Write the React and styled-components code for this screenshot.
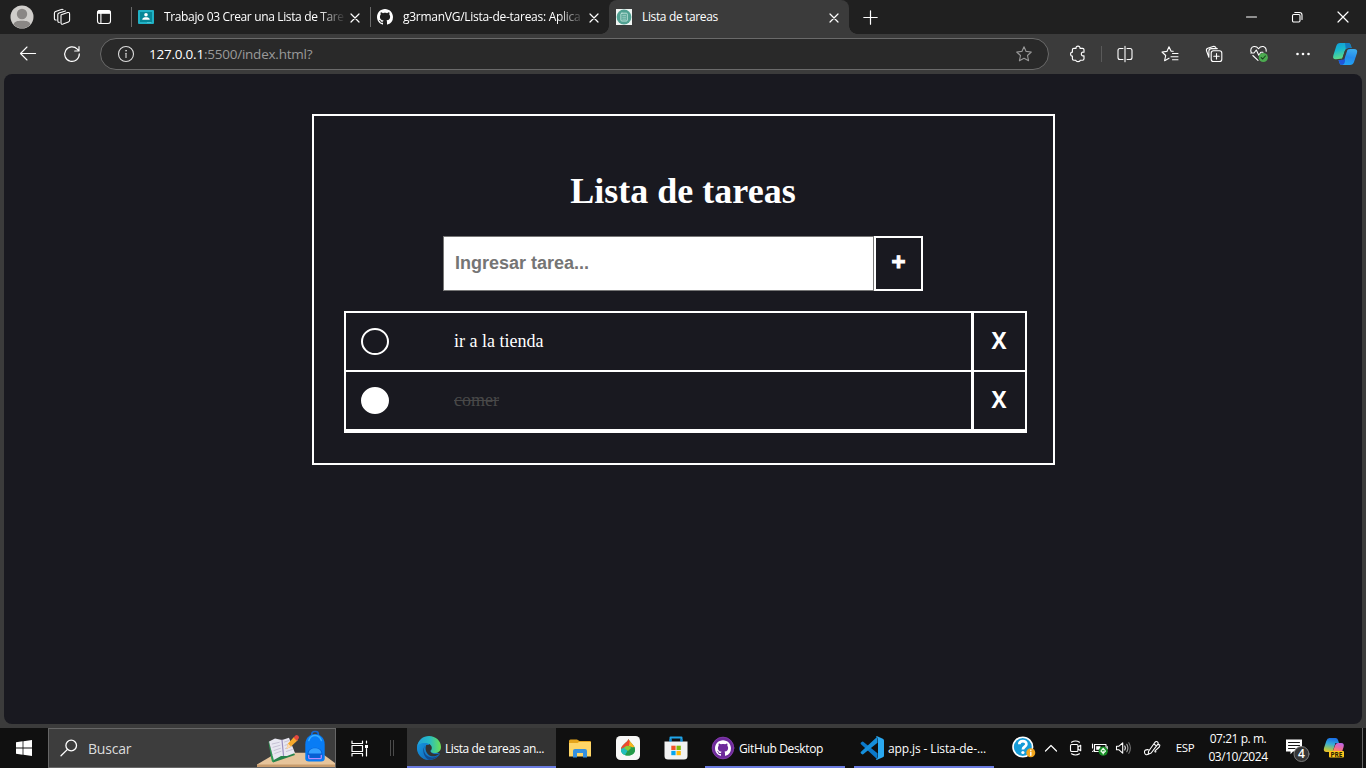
import React from 'react';
import styled, { createGlobalStyle } from 'styled-components';

const Global = createGlobalStyle`
  * { box-sizing: border-box; }
  html, body { margin: 0; padding: 0; background: #3b3b3b; overflow: hidden; }
  svg { display: block; flex: none; }
`;

const ui = `"Open Sans", "Noto Sans", sans-serif`;

const Screen = styled.div`
  width: 1366px;
  height: 768px;
  display: flex;
  flex-direction: column;
  background: #3b3b3b;
  color: #fff;
  font-family: ${ui};
  overflow: hidden;
`;

/* ---------- browser chrome ---------- */

const TabStrip = styled.header`
  height: 34px;
  display: flex;
  background: #202020;
`;

const Slot = styled.div`
  width: ${(p) => p.$w}px;
  height: 100%;
  flex: none;
  display: flex;
  align-items: center;
  justify-content: center;
`;

const Spacer = styled.div`
  flex: ${(p) => (p.$w ? `0 0 ${p.$w}px` : '1')};
`;

const Tab = styled.div`
  position: relative;
  width: ${(p) => p.$w || 239}px;
  height: 34px;
  flex: none;
  display: flex;
  align-items: center;
  padding: 0 10px 0 7px;
  background: ${(p) => (p.$active ? '#3b3b3b' : 'transparent')};
  border-radius: 8px 8px 0 0;
`;

const TabDivider = styled.i`
  position: absolute;
  left: 0;
  top: 7px;
  width: 1px;
  height: 20px;
  background: #6a6a6a;
`;

const TabFlare = styled.i`
  position: absolute;
  bottom: 0;
  ${(p) => (p.$side === 'left' ? 'left: -8px;' : 'right: -8px;')}
  width: 8px;
  height: 8px;
  background: radial-gradient(circle at ${(p) => (p.$side === 'left' ? '0' : '100%')} 0, transparent 7.5px, #3b3b3b 8px);
`;

const TabTitle = styled.span`
  width: 180px;
  margin-left: 10px;
  padding-bottom: 1px;
  white-space: nowrap;
  font-size: 12px;
  line-height: 18px;
  letter-spacing: ${(p) => p.$ls}px;
  mask-image: ${(p) => (p.$fade ? 'linear-gradient(to right, #000 155px, transparent 182px)' : 'none')};
`;

const TabClose = styled.div`
  margin-left: auto;
  padding-top: 1px;
`;

const Toolbar = styled.nav`
  height: 40px;
  display: flex;
  align-items: center;
  background: #3b3b3b;
`;

const AddressBar = styled.div`
  width: 949px;
  height: 32px;
  flex: none;
  display: flex;
  align-items: center;
  padding: 0 15px 0 16px;
  border: 1px solid #6a6a6a;
  border-radius: 16px;
  background: #292929;
`;

const Url = styled.div`
  flex: 1;
  margin-left: 14px;
  font-size: 13.5px;
  line-height: 20px;
  letter-spacing: -0.23px;
  color: #9a9a9a;
  b { font-weight: 400; color: #fff; }
`;

const ToolDivider = styled.i`
  width: 1px;
  height: 16px;
  background: #5a5a5a;
`;

/* ---------- page ---------- */

const Viewport = styled.main`
  width: 1358px;
  height: 650px;
  margin: 0 4px 4px;
  padding-top: 40px;
  border-radius: 8px;
  background: #191920;
`;

const Card = styled.section`
  width: 743px;
  height: 351px;
  margin-left: 308px;
  padding: 55px 26px 0 30px;
  border: 2px solid #fff;
  display: flex;
  flex-direction: column;
  font-family: "Liberation Serif", serif;
`;

const Title = styled.h1`
  margin: 0 0 24px;
  padding-right: 5px;
  font-size: 36px;
  line-height: 41px;
  font-weight: 700;
  text-align: center;
`;

const TaskForm = styled.div`
  display: flex;
  height: 55px;
  margin-left: 99px;
`;

const TaskInput = styled.input`
  width: 431px;
  height: 55px;
  padding: 0 11px;
  border: 1px solid #767676;
  border-radius: 0;
  background: #fff;
  font: 700 18px "Liberation Sans", sans-serif;
  &::placeholder { color: #757575; opacity: 1; }
`;

const AddButton = styled.button`
  width: 49px;
  height: 55px;
  padding: 0 0 4px;
  border: 2px solid #fff;
  background: #191920;
  color: #fff;
  font: 700 24px "Liberation Sans", sans-serif;
  -webkit-text-stroke: 1px #fff;
`;

const TaskList = styled.ul`
  width: 683px;
  height: 122px;
  margin: 20px 0 0;
  padding: 0;
  list-style: none;
  border: 2px solid #fff;
`;

const TaskRow = styled.li`
  display: flex;
  align-items: center;
  height: 59px;
  border-bottom: 2px solid #fff;
`;

const Check = styled.span`
  width: 28px;
  height: 27px;
  margin-left: 15px;
  border: 2px solid #fff;
  border-radius: 50%;
  background: ${(p) => (p.$done ? '#fff' : 'transparent')};
`;

const TaskText = styled.span`
  flex: 1;
  margin-left: 65px;
  padding-bottom: 2px;
  font-size: 18px;
  line-height: 20px;
  color: ${(p) => (p.$done ? '#484848' : '#fff')};
  text-decoration: ${(p) => (p.$done ? 'line-through' : 'none')};
`;

const RemoveButton = styled.button`
  width: 54px;
  align-self: stretch;
  padding: 0 1px 3px 0;
  border: 0;
  border-left: 3px solid #fff;
  background: transparent;
  color: #fff;
  font: 700 22.5px "Open Sans", sans-serif;
`;

/* ---------- taskbar ---------- */

const Taskbar = styled.footer`
  height: 40px;
  display: flex;
  background: #101010;
`;

const Search = styled.div`
  width: 288px;
  height: 40px;
  flex: none;
  display: flex;
  align-items: center;
  padding-left: 11px;
  border: 1px solid #666;
  background: #3d3d3d;
  color: #dcdcdc;
  font-size: 14px;
  span { margin-left: 10px; flex: 1; letter-spacing: -0.2px; }
`;

const TaskButton = styled.div`
  width: ${(p) => p.$w}px;
  height: 40px;
  flex: none;
  display: flex;
  align-items: center;
  padding: 2px 0 0 ${(p) => p.$pad}px;
  gap: 4px;
  white-space: nowrap;
  background: ${(p) => (p.$active ? '#333333' : 'transparent')};
  border-bottom: 2px solid #6b7ce0;
  font-size: 12px;
  letter-spacing: ${(p) => p.$ls}px;
`;

const Language = styled(Slot)`
  padding-bottom: 1px;
  font-size: 11.5px;
  letter-spacing: -0.3px;
`;

const Clock = styled.div`
  width: 74px;
  flex: none;
  padding-top: 2px;
  text-align: center;
  font-size: 12px;
  line-height: 18px;
  letter-spacing: -0.45px;
  white-space: nowrap;
`;

const DesktopEdge = styled.i`
  width: 4px;
  border-left: 1px solid #666;
`;

/* ---------- icons ---------- */

const Icon = ({ w = 16, h, vb, children, sw = 1.1, c = '#fff' }) => (
  <svg width={w} height={h || w} viewBox={vb || `0 0 ${w} ${h || w}`} fill="none" stroke={c} strokeWidth={sw} strokeLinecap="round" strokeLinejoin="round">
    {children}
  </svg>
);

const GH = 'M8 0C3.58 0 0 3.58 0 8c0 3.54 2.29 6.53 5.47 7.59.4.07.55-.17.55-.38 0-.19-.01-.82-.01-1.49-2.01.37-2.53-.49-2.69-.94-.09-.23-.48-.94-.82-1.13-.28-.15-.68-.52-.01-.53.63-.01 1.08.58 1.23.82.72 1.21 1.87.87 2.33.66.07-.52.28-.87.51-1.07-1.78-.2-3.64-.89-3.64-3.95 0-.87.31-1.59.82-2.15-.08-.2-.36-1.02.08-2.12 0 0 .67-.21 2.2.82.64-.18 1.32-.27 2-.27s1.36.09 2 .27c1.53-1.04 2.2-.82 2.2-.82.44 1.1.16 1.92.08 2.12.51.56.82 1.27.82 2.15 0 3.07-1.87 3.75-3.65 3.95.29.25.54.73.54 1.48 0 1.07-.01 1.93-.01 2.2 0 .21.15.46.55.38A8.01 8.01 0 0 0 16 8c0-4.42-3.58-8-8-8z';

const Avatar = () => (
  <Icon w={24}>
    <g stroke="none">
      <circle cx="12" cy="12" r="11.5" fill="#d0cecb" />
      <circle cx="12" cy="9" r="5.2" fill="#8a8785" />
      <path d="M3.5 19.5C4.5 16.4 7 15.8 12 15.8s7.5.6 8.5 3.7A11.5 11.5 0 0 1 3.5 19.5z" fill="#8a8785" />
    </g>
  </Icon>
);
const Workspaces = () => (
  <Icon w={18}>
    <path d="M8.3 6.8 14.7 4.6Q16.6 4 16.6 6V12.2Q16.6 13.4 15.4 13.9L10 16.1Q8 16.8 8 14.8V8Q8 7 8.3 6.8z" />
    <path d="M6.2 14.4Q4.8 14.4 4.8 12.9V6.7Q4.8 5.5 6 5L12.4 2.9" />
    <path d="M3.2 12Q1.4 12.2 1.4 10.6V5.2Q1.4 4 2.6 3.5L8.4 1.4Q9.4 1 10 1.7" />
  </Icon>
);
const VerticalTabs = () => (
  <Icon w={16}>
    <path d="M1.5 4.3Q1.5 1.5 4 1.5H12Q14.5 1.5 14.5 4.3z" fill="#fff" />
    <rect x="1.5" y="1.5" width="13" height="13" rx="2.5" />
    <path d="M4.9 4V14.5" />
  </Icon>
);
const Classroom = () => (
  <Icon w={16}>
    <g stroke="none">
      <rect y="1" width="16" height="14" rx="1" fill="#20b1c5" />
      <rect x="2" y="3" width="12" height="10" fill="#078797" />
      <circle cx="8" cy="5.8" r="1.8" fill="#fff" />
      <path d="M4.2 10.8C4.2 8.8 6.3 8.3 8 8.3s3.8.5 3.8 2.5z" fill="#fff" />
      <path d="M9 13h4v1H9z" fill="#4cc3d3" />
    </g>
  </Icon>
);
const GitHubMark = ({ size = 16 }) => (
  <Icon w={size} vb="0 0 16 16"><path d={GH} fill="#fff" stroke="none" /></Icon>
);
const ListFavicon = () => (
  <Icon w={16}>
    <rect width="16" height="16" fill="#f0f5f3" stroke="none" />
    <circle cx="8" cy="8" r="7.4" fill="#51a192" stroke="none" />
    <rect x="4.9" y="4.2" width="6.4" height="7.8" rx="1" stroke="#c5e7de" strokeWidth=".9" />
    <path d="M6.7 6.3H9.6M6.7 8.2H9.6M6.7 10.1H9.6" stroke="#b9ddd4" strokeWidth=".8" />
  </Icon>
);
const Cross = ({ size = 8, sw = 1.2 }) => (
  <Icon w={size + 2} sw={sw}><path d={`M1 1 ${size + 1} ${size + 1}M${size + 1} 1 1 ${size + 1}`} /></Icon>
);
const Plus = () => <Icon w={15} sw={1.2}><path d="M7.5.8V14.2M.8 7.5H14.2" /></Icon>;
const Restore = () => (
  <Icon w={12} sw={1.1}>
    <rect x="1.5" y="3.5" width="7.5" height="7.5" rx="1.2" />
    <path d="M3.8 1.5H8.5Q11 1.5 11 4V8.4" />
  </Icon>
);
const Back = () => <Icon w={18} sw={1.1}><path d="M1.5 8.5H16.6M8 2 1.5 8.5 8 15" /></Icon>;
const Reload = () => (
  <Icon w={18} sw={1.2}><path d="M16.3 8.8A7.3 7.3 0 1 1 14.3 4.1L15.8 5.7M16 1.7V6H11.7" /></Icon>
);
const Info = () => (
  <Icon w={18} c="#ddd"><circle cx="9" cy="9" r="7.5" /><path d="M9 8.3V12.4" /><circle cx="9" cy="5.7" r=".5" fill="#ddd" strokeWidth=".6" /></Icon>
);
const Star = () => (
  <Icon w={18} c="#989898"><path d="M9 1.8 11.1 6.4 16.3 7 12.5 10.5 13.6 15.8 9 13.3 4.4 15.8 5.5 10.5 1.7 7 6.9 6.4z" /></Icon>
);
const Puzzle = () => (
  <Icon w={18} sw={1.15}>
    <path d="M4.8 3.4H7C6.9 1.8 7.8 1.1 9 1.1S11.1 1.8 11 3.4H13.6Q15 3.4 15 4.8V7.2H14C11.8 7 11.8 11 14 10.8H15V13.8Q15 15.2 13.6 15.2H11.2C11.2 17 6.8 17 6.8 15.2H4.8Q3.4 15.2 3.4 13.8V11.1C1 11.3 1 6.9 3.4 7.1V4.8Q3.4 3.4 4.8 3.4z" />
  </Icon>
);
const Split = () => (
  <Icon w={18} sw={1.1}><path d="M7 3.5H4Q2 3.5 2 5.5V12.5Q2 14.5 4 14.5H7M11 3.5H14Q16 3.5 16 5.5V12.5Q16 14.5 14 14.5H11M9 1.3V16.7" /></Icon>
);
const Favorites = () => (
  <Icon w={18} sw={1.1}><path d="M12.2 6.3 10 6.1 8 1.8 5.9 6.4 1 7 4.7 10.5 3.6 15.7 8 13.2M11.5 8.5H17M10 11.7H17M11.5 14.7H17" /></Icon>
);
const Collections = () => (
  <Icon w={18} sw={1.1}>
    <rect x="6.2" y="5.8" width="10.6" height="10.7" rx="2.3" />
    <path d="M11.5 8.5V13.9M8.8 11.2H14.2M3.9 12.3 1.6 6Q.9 4 2.8 3.3L8 1.5Q10 1 10.9 2.6M3.9 11.5V6.1Q3.9 3.6 6.4 3.6H12.3" />
  </Icon>
);
const Essentials = () => (
  <Icon w={20} sw={1.1}>
    <path d="M2.5 9C.8 6 2.2 2.8 5 2.5Q7.8 2.2 9.5 4.7 11.4 2.1 14.2 2.5 17.4 3.4 17.2 7.2M3.8 11.5 9 16.3M1.8 9H5L7.3 6 9.8 11.2 11.8 8.3H14" />
    <circle cx="14.3" cy="13.5" r="4.6" fill="#4cab50" stroke="none" />
    <path d="M12.2 13.6 13.7 15 16.4 12" stroke="#173e1b" />
  </Icon>
);
const Dots = () => (
  <Icon w={16} h={4}><g fill="#fff" stroke="none"><circle cx="2.5" cy="2" r="1.3" /><circle cx="8" cy="2" r="1.3" /><circle cx="13.5" cy="2" r="1.3" /></g></Icon>
);

const Copilot = () => (
  <Icon w={26} h={24}>
    <defs>
      <linearGradient id="cpA" x1="0" y1="0" x2=".3" y2="1"><stop stopColor="#129cda" /><stop offset=".45" stopColor="#16b7cf" /><stop offset="1" stopColor="#63dd83" /></linearGradient>
      <linearGradient id="cpB" x1=".6" y1="0" x2=".4" y2="1"><stop stopColor="#3cacee" /><stop offset=".5" stopColor="#258ced" /><stop offset="1" stopColor="#21a5f5" /></linearGradient>
    </defs>
    <g stroke="none">
      <path d="M8 1H16Q18 1 18.7 3L19.6 6H16Q13.7 6 12.8 9L10.3 16.5 4 17.3Q.2 17.5 1.3 13.5L4.3 4Q5.2 1 8 1z" fill="url(#cpA)" />
      <path d="M13 1H16Q18 1 18.7 3L19.6 6H16.5Q14.8 6 13.8 7.5z" fill="#1679be" />
      <path d="M18.2 7H22Q26 7 25 11L22 20Q21 23 18 23H10Q8 23 7.2 20.5L6.6 18H9Q11.5 18 12.4 15L14.5 8.7Q15 7 18.2 7z" fill="url(#cpB)" />
      <path d="M6.6 18H9Q11.5 18 12.4 15L13 13V19Q12.7 22.5 10 23 8 23 7.2 20.5z" fill="#2057da" />
      <path d="M12.6 9.5Q13.5 6.8 15.8 6.8L12.6 16.2Q12 18 10 17.8z" fill="#3b3b3b" />
    </g>
  </Icon>
);
const Windows = () => (
  <Icon w={16}><path d="M0 2.3 6.6 1.3V7.5H0zM7.4 1.2 16 0V7.5H7.4zM0 8.4H6.6V14.7L0 13.8zM7.4 8.4H16V16L7.4 14.8z" fill="#fff" stroke="none" /></Icon>
);
const Magnifier = () => (
  <Icon w={18} sw={1.3}><circle cx="11.2" cy="6.5" r="5.3" /><path d="M7.5 10.4 1 16.8" /></Icon>
);
const Backpack = () => (
  <Icon w={80} h={38}>
    <g stroke="none">
      <path d="M2 35.5 22 23.8H66L80 34V38H2z" fill="#e6c49b" />
      <path d="M2 35.5H80V38H2z" fill="#c79b6c" />
      <path d="M16 27.5 37.5 21 40 26 18 33.5z" fill="#26824b" />
      <path d="M13.5 13 14 12.3 19 32Q18 34 16.8 32z" fill="#2f9b58" />
      <path d="M14 12.5 20 9.5 27 11 34 8.7 40 24 32 27 26 27 18.8 31z" fill="#e8e7f1" />
      <path d="M27 11 28.5 26.5" stroke="#9b8fc0" strokeWidth="1.2" />
      <path d="M17.2 15 24.3 13.3M18 18.3 25 16.3M19 21.5 25.5 19.3M19.8 24.5 26 22.3M29.5 13 34 11.5M30 16.3 36 14.3M30.5 19.5 36.5 17.5M31.3 22.5 37.3 20.5" stroke="#bdb8cd" strokeWidth=".8" />
      <path d="M31.5 20 33 14.5 39 8 43 11 36 17.5z" fill="#f7a92b" />
      <path d="M38.5 8.5 41 6Q44 6.1 44 9L41.7 11.7z" fill="#e4493f" />
      <path d="M31.5 20 33 14.5 36 17.5z" fill="#fbdab5" />
      <g transform="translate(0 1.5)">
        <rect x="56.8" y="1" width="6.5" height="6" rx="2.5" fill="none" stroke="#1468d4" strokeWidth="1.7" />
        <path d="M50.3 28V14C50.3 0 69.7 0 69.7 14V28Q69.7 31 66 31H54Q50.3 31 50.3 28z" fill="#087cf5" />
        <path d="M53.8 10Q55.5 5 60 5T66.4 10" fill="none" stroke="#38adff" strokeWidth="1.5" />
        <path d="M52.5 28V23.5C52.5 15 67.5 15 67.5 23.5V28Q60 30.5 52.5 28z" fill="#065fd4" />
        <path d="M53.6 23C53.6 16 66.4 16 66.4 23z" fill="#35a0ff" />
        <path d="M53.7 25V27Q53.7 28.2 55 28.2H65Q66.3 28.2 66.3 27V25" fill="none" stroke="#b58cff" strokeWidth="1.3" />
      </g>
    </g>
  </Icon>
);
const TaskView = () => (
  <Icon w={17} sw={1.2}>
    <path d="M1 1V3.5H11.5V1M1 16V13.5H11.5V16M15.5 1V3M15.5 8.5V16" />
    <rect x="1" y="5.5" width="10.5" height="6" />
    <path d="M14 5H17V8H14z" fill="#fff" stroke="none" />
  </Icon>
);
const Grip = () => <Icon w={6} h={16} c="#4b4b4b" sw={1}><path d="M1.5 0V16M4.5 0V16" /></Icon>;
const Edge = () => (
  <Icon w={24}>
    <defs>
      <linearGradient id="edA" x1="0" y1=".5" x2="1" y2=".5"><stop stopColor="#239fd8" /><stop offset=".5" stopColor="#25bbc6" /><stop offset="1" stopColor="#6be154" /></linearGradient>
      <linearGradient id="edB" x1="0" y1="0" x2="1" y2="1"><stop stopColor="#1598df" /><stop offset="1" stopColor="#1266b8" /></linearGradient>
    </defs>
    <g stroke="none">
      <path d="M0 12C0 5 5.4 2 12 2V14L23 17.5C21 21.5 17 24 12 24A12 12 0 0 1 0 12z" fill="url(#edB)" />
      <path d="M8 9.5C5.3 14 8 21 15 21.6 18 21.7 21 20.2 22.6 18.1 20.5 22 16.3 24 12 24 5.5 22.5 3.5 14 8 9.5z" fill="#124b8e" />
      <path d="M9.5 8.6C8 11 8.2 16 11.5 18.8 15 21.5 20 20.3 23 17.2 19 19 15 18 13.6 15.5 12.4 13.5 14.5 11 12.8 9.3 12 8.5 10.7 8.2 9.5 8.6z" fill="#333" />
      <path d="M.2 10.5C1.2 4 6 0 12 0 19 0 24 5 24 11c0 4-3 6-6.5 6-3 0-4.5-1.1-3.3-2.7C16.5 10.5 12.5 7.2 8.5 7.1 4.5 7 1 8.8.2 10.5z" fill="url(#edA)" />
      <path d="M.3 10.5C3 6.8 9 5.8 12.5 9.2 9.2 8 6.5 10.2 6.3 14 6.2 18.5 8.5 22 12 24A12 12 0 0 1 .3 10.5z" fill="url(#edB)" />
    </g>
  </Icon>
);
const Folder = () => (
  <Icon w={22} h={19}>
    <g stroke="none">
      <path d="M0 2Q0 .5 1.5.5H8L10.5 2H21Q22 2 22 3V17H0z" fill="#e6a51c" />
      <path d="M0 4H8.5L10 3H22V17.5H0z" fill="#ffd667" />
      <path d="M4 18.5V12Q4 10 6 10H16Q18 10 18 12V18.5H14V14H8V18.5z" fill="#3590de" />
    </g>
  </Icon>
);
const Drop = () => (
  <Icon w={24}>
    <defs>
      <clipPath id="dropClip"><path d="M12.5 3C14 6.5 19.5 9.5 19 14.2 18.6 21.3 5.4 21.3 5 14.2 4.7 9 11 7 12.5 3z" /></clipPath>
      <filter id="dropSoft"><feGaussianBlur stdDeviation=".6" /></filter>
    </defs>
    <g stroke="none">
      <rect width="24" height="24" rx="4.5" fill="#f8f8f7" />
      <g clipPath="url(#dropClip)">
        <path d="M4 2H20V20H4z" fill="#28a65c" />
        <g filter="url(#dropSoft)">
          <path d="M3 1H17L13 10 10 11 3 15z" fill="#ef492e" />
          <path d="M14 3 21 6V13L13 10z" fill="#ffb31c" />
          <path d="M3 14 9 11 12 15 8 21H3z" fill="#20bfbd" />
          <path d="M12 14 20 10V21H8z" fill="#269b48" />
          <path d="M10 10Q14 9 15 12L12 15 8 12z" fill="#8bcb35" />
        </g>
      </g>
    </g>
  </Icon>
);
const Store = () => (
  <Icon w={24}>
    <path d="M6.5 6V1.5H17.5V6" stroke="#20a5e9" strokeWidth="2" />
    <g stroke="none">
      <path d="M.5 5.5H23.5V20Q23.5 23.5 20 23.5H4Q.5 23.5 .5 20z" fill="#f2f2f2" />
      <path d="M7.3 9.7h4.3v4.3H7.3z" fill="#f35325" /><path d="M12.5 9.7h4.3v4.3h-4.3z" fill="#81bc06" />
      <path d="M7.3 14.9h4.3v4.3H7.3z" fill="#05a6f0" /><path d="M12.5 14.9h4.3v4.3h-4.3z" fill="#ffba08" />
    </g>
    <path d="M6.5 5.5V3M17.5 5.5V3" stroke="#0e87cc" strokeWidth="2" strokeLinecap="butt" />
  </Icon>
);
const GitHubDesktop = () => (
  <Icon w={24}>
    <circle cx="12" cy="12" r="10.9" fill="#6e2b9b" stroke="#9a46c4" strokeWidth=".6" />
    <g transform="translate(4 4.2)"><path d={GH} fill="#fff" stroke="none" /></g>
  </Icon>
);
const VSCode = () => (
  <Icon w={24}>
    <g stroke="none">
      <path d="M1 6.6Q.1 7.4 1 8.2L17.5 23.5V17.2L3.2 5.8Q2.5 5.4 1.8 5.9z" fill="#0b79ca" />
      <path d="M1 17.4Q.1 16.6 1 15.8L17.5.5V6.8L3.2 18.2Q2.5 18.6 1.8 18.1z" fill="#168fdb" />
      <path d="M17.2.2 22.8 2.7Q24 3.3 24 4.6V19.4Q24 20.7 22.8 21.3L17.2 23.8Q16.2 24 15.8 23.2 17.9 22.8 18 21V3Q17.9 1.2 15.8.8 16.2 0 17.2.2z" fill="#2aa9f2" />
    </g>
  </Icon>
);
const Help = () => (
  <Icon w={24}>
    <circle cx="10.8" cy="11" r="9.8" fill="#159bd7" stroke="#fff" strokeWidth="1.6" />
    <path d="M7.3 8.3C7.3 3.9 14.5 4 14.4 8.2 14.4 10.7 10.9 10.6 10.9 13.5" stroke="#fff" strokeWidth="2.7" fill="none" strokeLinecap="butt" />
    <circle cx="10.9" cy="16.5" r="1.6" fill="#fff" stroke="none" />
    <circle cx="18.8" cy="16.8" r="4.5" fill="#f4a71d" stroke="none" />
    <path d="M18.8 16.3V19.3M18.8 14.1V14.4" stroke="#fff" strokeWidth="1.4" />
  </Icon>
);
const Chevron = () => <Icon w={14} h={8} sw={1.2}><path d="M1.5 7 7 1.5 12.5 7" /></Icon>;
const MeetNow = () => (
  <Icon w={16}><rect x="2.5" y="4.5" width="7.5" height="7" rx="1.3" /><path d="M10 7 12.7 5.3V10.7L10 9M3.5 2.2Q7.5-.2 11.5 2.2M3.5 13.8Q7.5 16.2 11.5 13.8" /></Icon>
);
const Battery = () => (
  <Icon w={18}>
    <path d="M3.5 5.5H15V12.5H3.5z" /><path d="M5.2 7.2H9.5V10.8H5.2z" fill="#fff" stroke="none" />
    <path d="M1.5 5V9M3.5 5.5V10Q3.3 12.2 1.5 12.5M16.2 7.5V10" />
    <circle cx="12.2" cy="12.2" r="4.6" fill="#178d25" stroke="none" />
    <path d="M12.2 9.3 14.5 12 12.2 14.3 9.9 12zM12.2 12V15" stroke="#ecffed" />
  </Icon>
);
const Speaker = () => (
  <Icon w={18}>
    <path d="M1.5 7.2H4L7.7 3.8V14.2L4 10.8H1.5z" /><path d="M9.8 7Q11 9 9.8 11" />
    <path d="M11.8 5.3Q14 9 11.8 12.7" stroke="#aaa" /><path d="M13.8 3.7Q17 9 13.8 14.3" stroke="#777" />
  </Icon>
);
const Pen = () => (
  <Icon w={18}>
    <path d="M5.6 12.3 11.8 3.5Q13.5 1.7 14.7 3.2T14.3 5.8L8.2 14 5.2 15.2zM11 5 13 6.7M14.5 5.8Q18 5 16.3 8L12 11.8Q11.6 13.3 13 12.7M5.2 10.6Q1 10.4 1.5 13.5T5.5 15.3" />
  </Icon>
);
const Notifications = () => (
  <Icon w={28} h={28}>
    <path d="M3 5.5H19V17.5H10L7.5 20.2V17.5H3z" fill="#fff" stroke="none" />
    <path d="M5.5 8.5H16.5M5.5 11.5H16.5M5.5 14.5H12" stroke="#191919" strokeWidth="1.1" />
    <circle cx="18.5" cy="20" r="7.5" fill="#363636" stroke="#858585" strokeWidth=".9" />
    <text x="18.5" y="24.3" fill="#fff" stroke="none" fontSize="12" fontWeight="600" textAnchor="middle" fontFamily="Open Sans">4</text>
  </Icon>
);
const CopilotPre = () => (
  <Icon w={22} h={22}>
    <defs>
      <linearGradient id="preA" x1=".4" y1="0" x2=".2" y2="1"><stop stopColor="#1b72e8" /><stop offset=".4" stopColor="#37acd8" /><stop offset=".75" stopColor="#9ac65b" /><stop offset="1" stopColor="#f4bd21" /></linearGradient>
      <linearGradient id="preB" x1=".8" y1="0" x2=".4" y2="1"><stop stopColor="#ba65ee" /><stop offset=".6" stopColor="#ef6b95" /><stop offset="1" stopColor="#ff944a" /></linearGradient>
    </defs>
    <g stroke="none">
      <path d="M6.5 1H12.5Q14.5 1 15 3L16 6 12.5 6 9.5 15H3.5Q0 15 1 11L3.3 4Q4.3 1 6.5 1z" fill="url(#preA)" />
      <path d="M15 6H18.2Q21.6 6 20.6 10L19 15H9.5L12.2 8Q13 6 15 6z" fill="url(#preB)" />
      <rect x="6" y="14" width="15" height="6.5" rx="1" fill="#ffc61b" />
      <text x="13.5" y="19.6" textAnchor="middle" fontSize="6.5" fontWeight="700" fill="#282000" fontFamily="Open Sans">PRE</text>
    </g>
  </Icon>
);

const BrowserTab = ({ icon, title, active, fade, width, ls }) => (
  <Tab $active={active} $w={width}>
    {active ? <><TabFlare $side="left" /><TabFlare $side="right" /></> : <TabDivider />}
    {icon}
    <TabTitle $fade={fade} $ls={ls}>{title}</TabTitle>
    <TabClose><Cross size={8} /></TabClose>
  </Tab>
);

const tasks = [
  { text: 'ir a la tienda', done: false },
  { text: 'comer', done: true },
];

export default function App() {
  return (
    <Screen>
      <Global />
      <TabStrip>
        <Slot $w={44}><Avatar /></Slot>
        <Slot $w={36}><Workspaces /></Slot>
        <Slot $w={48}><VerticalTabs /></Slot>
        <Spacer $w={3} />
        <BrowserTab icon={<Classroom />} title="Trabajo 03 Crear una Lista de Tare" fade ls={-0.36} />
        <BrowserTab icon={<GitHubMark />} title="g3rmanVG/Lista-de-tareas: Aplica" fade ls={-0.27} />
        <BrowserTab icon={<ListFavicon />} title="Lista de tareas" active width={240} ls={-0.36} />
        <Slot $w={43}><Plus /></Slot>
        <Spacer />
        <Slot $w={46}><Icon w={11} h={2}><path d="M.5 1H10.5" /></Icon></Slot>
        <Slot $w={46}><Restore /></Slot>
        <Slot $w={46}><Cross size={10} /></Slot>
      </TabStrip>
      <Toolbar>
        <Slot $w={56}><Back /></Slot>
        <Slot $w={32}><Reload /></Slot>
        <Spacer $w={12} />
        <AddressBar>
          <Info />
          <Url><b>127.0.0.1</b>:5500/index.html?</Url>
          <Star />
        </AddressBar>
        <Spacer $w={6} />
        <Slot $w={46}><Puzzle /></Slot>
        <ToolDivider />
        <Slot $w={46}><Split /></Slot>
        <Slot $w={44}><Favorites /></Slot>
        <Slot $w={44}><Collections /></Slot>
        <Slot $w={46}><Essentials /></Slot>
        <Slot $w={42}><Dots /></Slot>
        <Slot $w={42}><Copilot /></Slot>
      </Toolbar>
      <Viewport>
        <Card>
          <Title>Lista de tareas</Title>
          <TaskForm>
            <TaskInput placeholder="Ingresar tarea..." />
            <AddButton>+</AddButton>
          </TaskForm>
          <TaskList>
            {tasks.map((t) => (
              <TaskRow key={t.text}>
                <Check $done={t.done} />
                <TaskText $done={t.done}>{t.text}</TaskText>
                <RemoveButton>X</RemoveButton>
              </TaskRow>
            ))}
          </TaskList>
        </Card>
      </Viewport>
      <Taskbar>
        <Slot $w={48}><Windows /></Slot>
        <Search><Magnifier /><span>Buscar</span><Backpack /></Search>
        <Slot $w={47}><TaskView /></Slot>
        <Slot $w={18}><Grip /></Slot>
        <Spacer $w={6} />
        <TaskButton $w={149} $pad={10} $active $ls={-0.42}><Edge />Lista de tareas an...</TaskButton>
        <Slot $w={48}><Folder /></Slot>
        <Slot $w={48}><Drop /></Slot>
        <Slot $w={47}><Store /></Slot>
        <Spacer $w={6} />
        <TaskButton $w={140} $pad={6} $ls={-0.35}><GitHubDesktop />GitHub Desktop</TaskButton>
        <Spacer $w={9} />
        <TaskButton $w={140} $pad={6} $ls={-0.12}><VSCode />app.js - Lista-de-...</TaskButton>
        <Spacer />
        <Slot $w={28}><Help /></Slot>
        <Slot $w={26}><Chevron /></Slot>
        <Slot $w={24}><MeetNow /></Slot>
        <Slot $w={24}><Battery /></Slot>
        <Slot $w={23}><Speaker /></Slot>
        <Slot $w={34}><Pen /></Slot>
        <Language $w={32}>ESP</Language>
        <Clock>07:21 p. m.<br />03/10/2024</Clock>
        <Spacer $w={4} />
        <Slot $w={36}><Notifications /></Slot>
        <Slot $w={38}><CopilotPre /></Slot>
        <Spacer $w={9} />
        <DesktopEdge />
      </Taskbar>
    </Screen>
  );
}
